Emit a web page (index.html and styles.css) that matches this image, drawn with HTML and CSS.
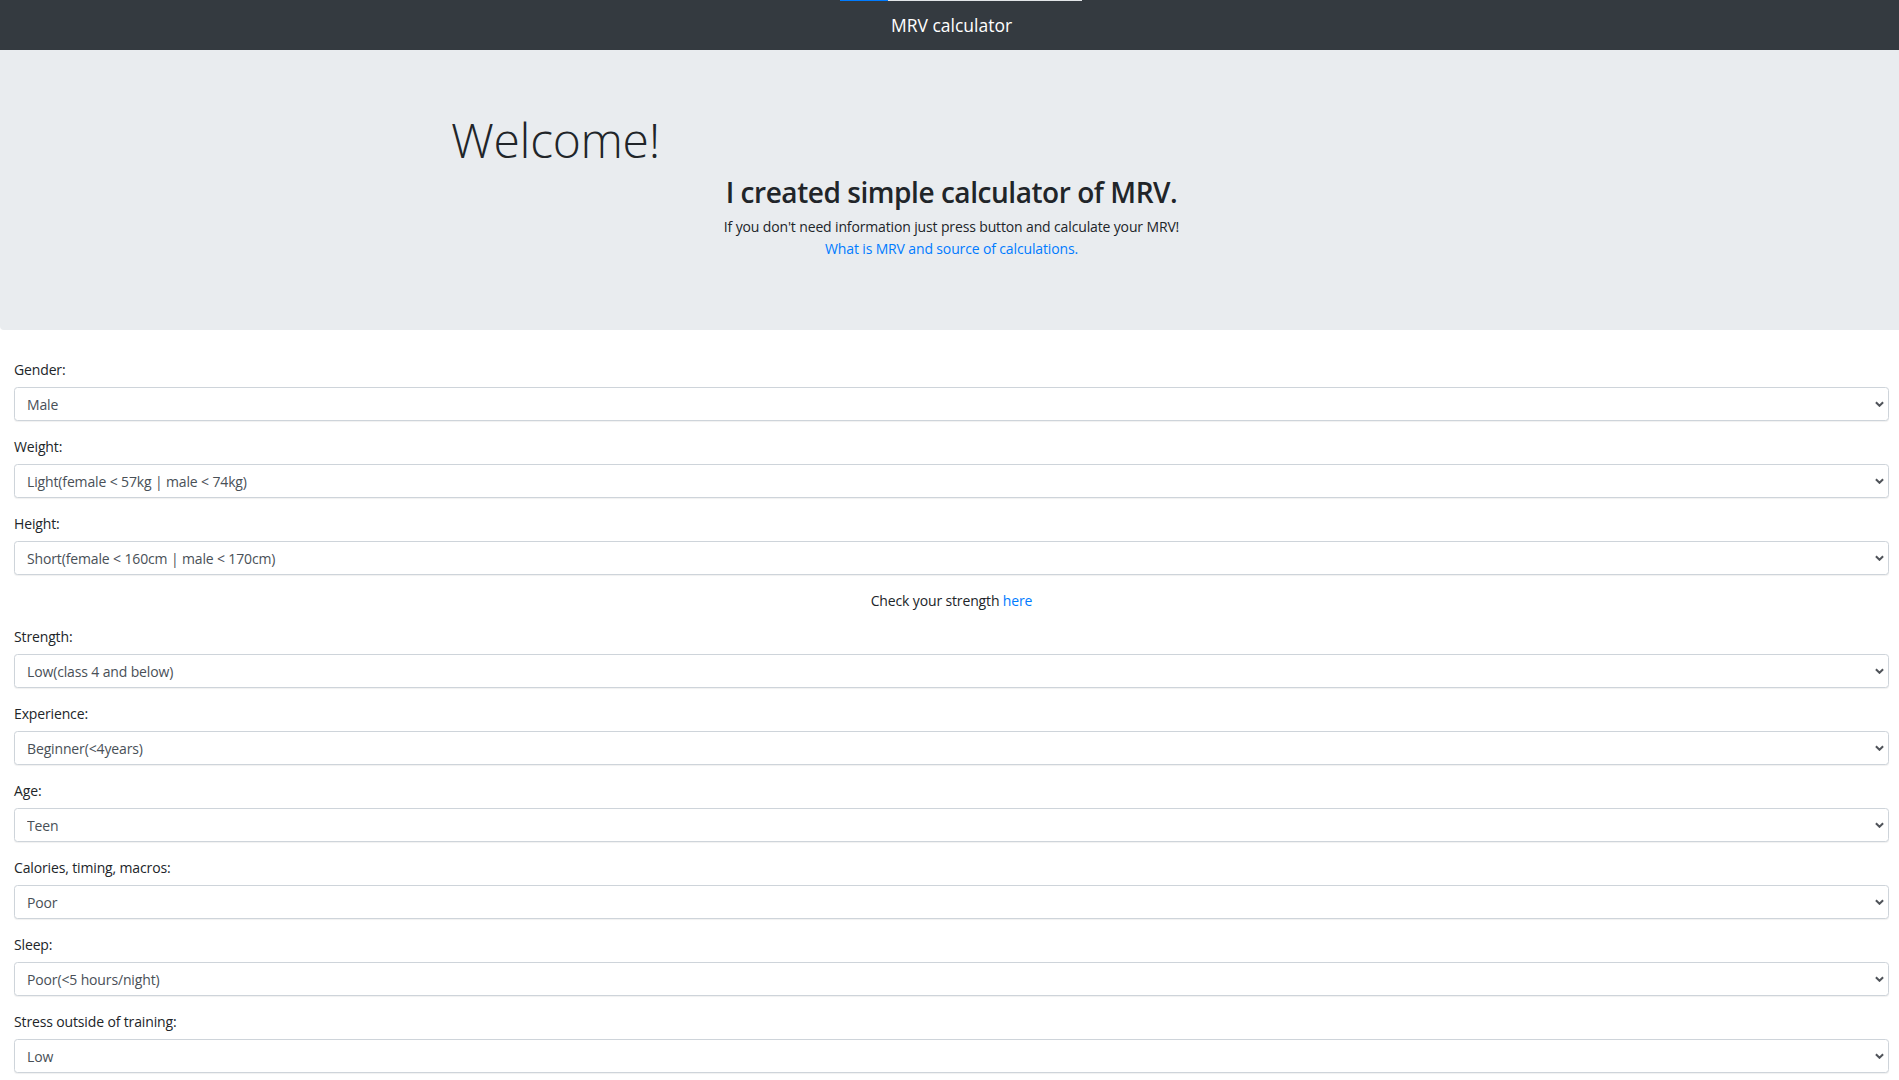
FILE: index.html
```html
<!DOCTYPE html>
<html lang="en">
<head>
<meta charset="utf-8">
<title>MRV calculator</title>
<link rel="stylesheet" href="styles.css">
</head>
<body>
<div class="page">
  <nav class="navbar">
    <div class="progress"><div class="progress-bar"></div></div>
    <span class="brand">MRV calculator</span>
  </nav>
  <header class="jumbotron">
    <h1 class="welcome">Welcome!</h1>
    <h2 class="lead-title">I created simple calculator of MRV.</h2>
    <p class="intro">If you don't need information just press button and calculate your MRV!<br><a href="#">What is MRV and source of calculations.</a></p>
  </header>
  <form class="form">
    <div class="group">
      <label>Gender:</label>
      <div class="select-wrap"><select><option>Male</option></select><svg class="chev" viewBox="0 0 10 6"><path d="M1 1 L5 5 L9 1"/></svg></div>
    </div>
    <div class="group">
      <label>Weight:</label>
      <div class="select-wrap"><select><option>Light(female &lt; 57kg | male &lt; 74kg)</option></select><svg class="chev" viewBox="0 0 10 6"><path d="M1 1 L5 5 L9 1"/></svg></div>
    </div>
    <div class="group">
      <label>Height:</label>
      <div class="select-wrap"><select><option>Short(female &lt; 160cm | male &lt; 170cm)</option></select><svg class="chev" viewBox="0 0 10 6"><path d="M1 1 L5 5 L9 1"/></svg></div>
    </div>
    <p class="check">Check your strength <a href="#">here</a></p>
    <div class="group">
      <label>Strength:</label>
      <div class="select-wrap"><select><option>Low(class 4 and below)</option></select><svg class="chev" viewBox="0 0 10 6"><path d="M1 1 L5 5 L9 1"/></svg></div>
    </div>
    <div class="group">
      <label>Experience:</label>
      <div class="select-wrap"><select><option>Beginner(&lt;4years)</option></select><svg class="chev" viewBox="0 0 10 6"><path d="M1 1 L5 5 L9 1"/></svg></div>
    </div>
    <div class="group">
      <label>Age:</label>
      <div class="select-wrap"><select><option>Teen</option></select><svg class="chev" viewBox="0 0 10 6"><path d="M1 1 L5 5 L9 1"/></svg></div>
    </div>
    <div class="group">
      <label>Calories, timing, macros:</label>
      <div class="select-wrap"><select><option>Poor</option></select><svg class="chev" viewBox="0 0 10 6"><path d="M1 1 L5 5 L9 1"/></svg></div>
    </div>
    <div class="group">
      <label>Sleep:</label>
      <div class="select-wrap"><select><option>Poor(&lt;5 hours/night)</option></select><svg class="chev" viewBox="0 0 10 6"><path d="M1 1 L5 5 L9 1"/></svg></div>
    </div>
    <div class="group">
      <label>Stress outside of training:</label>
      <div class="select-wrap"><select><option>Low</option></select><svg class="chev" viewBox="0 0 10 6"><path d="M1 1 L5 5 L9 1"/></svg></div>
    </div>
  </form>
</div>
</body>
</html>
```

FILE: styles.css
```css
html, body {
  margin: 0;
  padding: 0;
  overflow-x: hidden;
}
body {
  font-family: "Open Sans", "Noto Sans", sans-serif;
  font-size: 14px;
  line-height: 1.5;
  letter-spacing: -0.14px;
  color: #212529;
  background: #fff;
}
.page {
  width: 1903px;
}
a {
  color: #007bff;
  text-decoration: none;
}
.navbar {
  position: relative;
  height: 50px;
  background: #343a40;
  display: flex;
  align-items: center;
  justify-content: center;
}
.progress {
  position: absolute;
  top: 0;
  left: 840px;
  width: 242px;
  height: 1px;
  background: #e2e5e8;
}
.progress-bar {
  width: 48px;
  height: 1px;
  background: #007bff;
}
.brand {
  color: #fff;
  font-size: 17.5px;
  line-height: 26px;
  letter-spacing: 0;
  margin-top: -1px;
}
.jumbotron {
  background: #e9ecef;
  padding: 61px 28px 56px;
  margin-bottom: 29px;
  border-radius: 0 0 4px 4px;
}
.welcome {
  margin: 0 0 7px 423px;
  font-size: 48px;
  font-weight: 300;
  line-height: 1.2;
  letter-spacing: -0.3px;
}
.lead-title {
  margin: 0 0 7px;
  text-align: center;
  font-size: 28px;
  font-weight: 600;
  line-height: 1.2;
  letter-spacing: -0.45px;
}
.intro {
  margin: 0 0 14px;
  text-align: center;
  line-height: 22px;
}
.form {
  padding: 0 14px;
}
.group {
  margin-bottom: 15px;
}
.group label {
  display: block;
  line-height: 21px;
  margin-bottom: 7px;
}
.select-wrap {
  position: relative;
}
.select-wrap select {
  display: block;
  width: 100%;
  height: 34px;
  box-sizing: border-box;
  padding: 0 12px;
  border: 1px solid #ced4da;
  border-radius: 3.5px;
  background: #fff;
  color: #495057;
  font-family: inherit;
  font-size: 14px;
  letter-spacing: -0.14px;
  -webkit-appearance: none;
  appearance: none;
  box-shadow: 0 1px 1px rgba(0,0,0,0.06);
}
.chev {
  position: absolute;
  right: 5px;
  top: 14px;
  width: 9px;
  height: 6px;
  fill: none;
  stroke: #50545a;
  stroke-width: 2.2;
  pointer-events: none;
}
.check {
  margin: 0 0 15px;
  text-align: center;
  line-height: 21px;
}
```
